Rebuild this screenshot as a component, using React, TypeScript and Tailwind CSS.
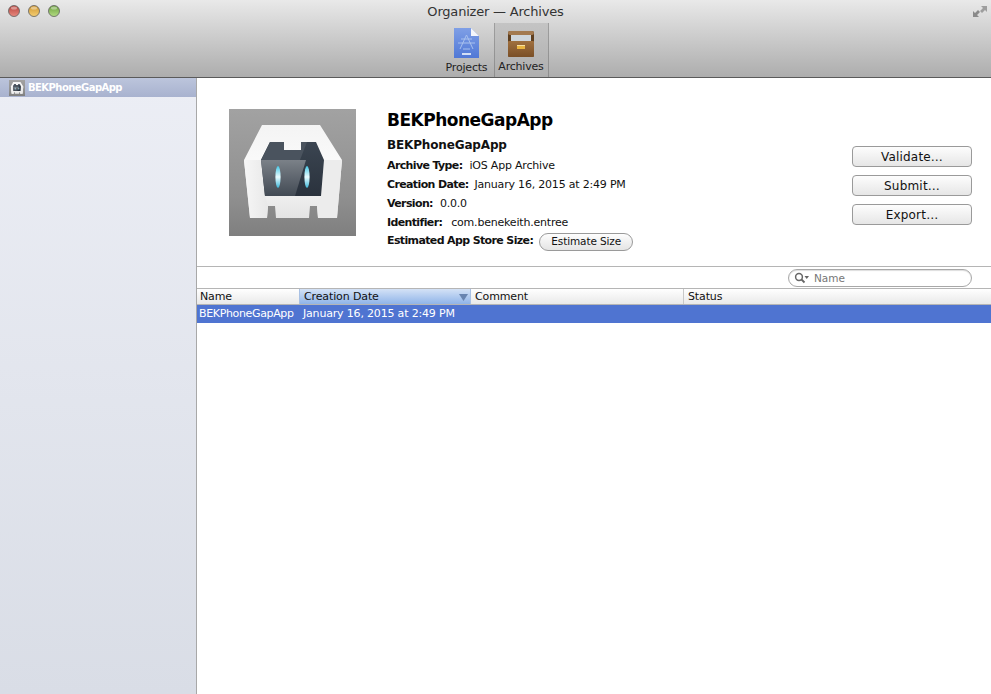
const font = { fontFamily: '"DejaVu Sans", sans-serif' };

function Light({ from, to, ring }: { from: string; to: string; ring: string }) {
  return (
    <svg width="12" height="12" viewBox="0 0 12 12">
      <defs>
        <linearGradient id={ring} x1="0" y1="0" x2="0" y2="1">
          <stop offset="0" stopColor={from} />
          <stop offset="1" stopColor={to} />
        </linearGradient>
      </defs>
      <circle cx="6" cy="6" r="5.5" fill={`url(#${ring})`} stroke="#5f5f5f" strokeWidth="0.8" />
      <ellipse cx="6" cy="3" rx="3" ry="1.5" fill="#fff" opacity="0.4" />
    </svg>
  );
}

function Cordova({ size, id }: { size: number; id: string }) {
  return (
    <svg width={size} height={size} viewBox="0 0 127 127" className="block">
      <defs>
        <linearGradient id={`${id}bg`} x1="0" y1="0" x2="0" y2="1">
          <stop offset="0" stopColor="#a2a2a2" />
          <stop offset="0.7" stopColor="#8f8f8f" />
          <stop offset="1" stopColor="#7f7f7f" />
        </linearGradient>
        <linearGradient id={`${id}body`} x1="0" y1="0" x2="0" y2="1">
          <stop offset="0" stopColor="#f4f4f4" />
          <stop offset="0.5" stopColor="#fbfbfb" />
          <stop offset="1" stopColor="#e4e4e4" />
        </linearGradient>
        <linearGradient id={`${id}side`} x1="0" y1="0" x2="1" y2="0">
          <stop offset="0" stopColor="#f6f6f6" />
          <stop offset="1" stopColor="#e8e8e8" />
        </linearGradient>
        <linearGradient id={`${id}glass`} x1="0" y1="0" x2="0" y2="1">
          <stop offset="0" stopColor="#3b4551" />
          <stop offset="1" stopColor="#2a323d" />
        </linearGradient>
        <linearGradient id={`${id}ref`} x1="0" y1="0" x2="0" y2="1">
          <stop offset="0" stopColor="#7b8188" />
          <stop offset="1" stopColor="#424a54" />
        </linearGradient>
        <linearGradient id={`${id}eye`} x1="0" y1="0" x2="0" y2="1">
          <stop offset="0" stopColor="#46c6e4" />
          <stop offset="0.5" stopColor="#eafcff" />
          <stop offset="1" stopColor="#3bb6d8" />
        </linearGradient>
      </defs>
      <rect width="127" height="127" fill={`url(#${id}bg)`} />
      <path d="M33 16H91L113 51L108 109H89L88 97H81L80 109H47L46 97H39L38 109H21L15 51Z" fill={`url(#${id}body)`} />
      <path d="M15 51H32L36 87L39 97L38 109H21Z" fill={`url(#${id}side)`} />
      <path d="M95 51H113L108 109H89L88 97L92 87Z" fill="#ececec" />
      <path d="M41 33H55V41H72V33H87L95 51L92 87H36L32 51Z" fill={`url(#${id}glass)`} />
      <path d="M32 51H77L66 87H36Z" fill={`url(#${id}ref)`} />
      <path d="M41 33H55V41H72V33H78L71 51H32Z" fill="#4a535e" />
      <ellipse cx="49" cy="68" rx="2.6" ry="11" fill={`url(#${id}eye)`} />
      <ellipse cx="78" cy="68" rx="2.6" ry="11" fill={`url(#${id}eye)`} />
    </svg>
  );
}

function TableHead({ label, className }: { label: string; className: string }) {
  return <div className={`flex items-center pt-[1px] text-[11px] tracking-[-0.12px] text-[#111] ${className}`}>{label}</div>;
}

function Button({ label }: { label: string }) {
  return (
    <div className="flex h-[21px] w-[120px] items-center justify-center rounded-[4px] border border-[#9a9a9a] bg-gradient-to-b from-[#fdfdfd] to-[#e6e6e6] text-[12px] tracking-[0.2px] text-[#111] shadow-[0_1px_0_#fff]">
      {label}
    </div>
  );
}

function Row({ label, value, gap }: { label: string; value: string; gap: string }) {
  return (
    <div className={`flex h-[19px] items-center text-[11px] text-[#111] ${gap}`}>
      <span className="font-bold tracking-[-0.63px]">{label}</span>
      <span className="tracking-[-0.2px]">{value}</span>
    </div>
  );
}

export default function App() {
  return (
    <div style={font} className="flex h-[694px] w-[991px] flex-col overflow-hidden bg-white">
      <header className="relative flex h-[78px] shrink-0 flex-col items-center border-b border-[#5a5a5a] bg-gradient-to-b from-[#e9e9e9] to-[#adadad]">
        <div className="absolute left-[8px] top-[5px] flex gap-[8px]">
          <Light from="#b8423b" to="#e88a80" ring="lr" />
          <Light from="#cf962f" to="#f5cf74" ring="ly" />
          <Light from="#6a9f3c" to="#b4dd84" ring="lg" />
        </div>
        <svg className="absolute right-[4px] top-[5px]" width="14" height="13" viewBox="0 0 14 13">
          <path d="M8 1H14V7L12 5L9 8L7 6L10 3Z" fill="#9e9e9e" />
          <path d="M0 12V6L2 8L5 5L7 7L4 10L6 12Z" fill="#8a8a8a" />
        </svg>
        <div className="flex h-[23px] items-center text-[13px] tracking-[-0.2px] text-[#333]">Organizer — Archives</div>
        <div className="flex h-[54px] w-full justify-center">
          <div className="ml-[-3px] flex w-[54px] flex-col items-center pt-[5px]">
            <svg width="25" height="30" viewBox="0 0 25 30">
              <defs>
                <linearGradient id="proj" x1="0" y1="0" x2="0" y2="1">
                  <stop offset="0" stopColor="#7f9fe6" />
                  <stop offset="1" stopColor="#5078d6" />
                </linearGradient>
              </defs>
              <path d="M0 0H17L25 8V30H0Z" fill="url(#proj)" />
              <path d="M17 0L25 8H17Z" fill="#f4f6fb" />
              <path d="M6 21L12.5 7L19 21M4 15H21M7 11H18M9 21H16" stroke="#a9c1ee" strokeWidth="1" fill="none" />
              <rect x="8" y="25" width="9" height="2" fill="#d3dff6" />
            </svg>
            <span className="mt-[3px] text-[11px] leading-[13px] tracking-[-0.2px] text-[#222]">Projects</span>
          </div>
          <div className="flex w-[55px] flex-col items-center border-x border-[#00000030] bg-gradient-to-b from-[#c4c4c4] to-[#aeaeae] pt-[8px]">
            <svg width="26" height="26" viewBox="0 0 26 26">
              <defs>
                <linearGradient id="drawer" x1="0" y1="0" x2="0" y2="1">
                  <stop offset="0" stopColor="#a0703f" />
                  <stop offset="1" stopColor="#7a4f27" />
                </linearGradient>
              </defs>
              <rect x="0" y="0" width="26" height="26" rx="2" fill="#5f3f1f" />
              <rect x="0" y="0" width="26" height="4" rx="2" fill="#a37a50" />
              <rect x="3" y="4" width="20" height="6" fill="#cfd6dc" />
              <rect x="0" y="10" width="26" height="16" rx="1" fill="url(#drawer)" />
              <rect x="9" y="14" width="8" height="4" fill="#e9b440" />
              <rect x="9" y="14" width="8" height="1" fill="#f9e0a0" />
            </svg>
            <span className="mt-[3px] text-[11px] leading-[13px] tracking-[-0.2px] text-[#222]">Archives</span>
          </div>
        </div>
      </header>
      <div className="flex min-h-0 flex-1">
        <aside className="w-[197px] shrink-0 border-r border-[#a8a8a8] bg-gradient-to-b from-[#eceef5] to-[#d9dde6]">
          <div className="flex h-[19px] items-center gap-[3px] bg-gradient-to-b from-[#bcc5dc] to-[#a8b2cf] pl-[9px] text-[10px] font-bold tracking-[-0.55px] text-white">
            <Cordova size={16} id="s" />
            <span>BEKPhoneGapApp</span>
          </div>
        </aside>
        <main className="flex min-w-0 flex-1 flex-col">
          <section className="flex h-[189px] shrink-0 border-b border-[#b5b5b5] pl-[32px] pt-[31px]">
            <Cordova size={127} id="m" />
            <div className="ml-[31px] mt-[-1px] w-[465px]">
              <h1 className="h-[25px] text-[17px] font-bold leading-[25px] tracking-[-0.5px] text-black">BEKPhoneGapApp</h1>
              <div className="mt-[1px] flex h-[23px] items-center pb-[2px] text-[12px] font-bold tracking-[-0.15px] text-[#111]">BEKPhoneGapApp</div>
              <Row label="Archive Type:" value="iOS App Archive" gap="gap-[7px]" />
              <Row label="Creation Date:" value="January 16, 2015 at 2:49 PM" gap="gap-[6px]" />
              <Row label="Version:" value="0.0.0" gap="gap-[7px]" />
              <Row label="Identifier:" value="com.benekeith.entree" gap="gap-[9px]" />
              <div className="mt-[-1px] flex h-[19px] items-center gap-[6px] text-[11px] text-[#111]">
                <span className="font-bold tracking-[-0.63px]">Estimated App Store Size:</span>
                <div className="flex h-[18px] w-[94px] items-center justify-center rounded-full border border-[#9a9a9a] bg-gradient-to-b from-[#fdfdfd] to-[#e4e4e4] text-[10.5px] tracking-[-0.12px]">Estimate Size</div>
              </div>
            </div>
            <div className="mt-[37px] flex flex-col gap-[8px]">
              <Button label="Validate…" />
              <Button label="Submit…" />
              <Button label="Export…" />
            </div>
          </section>
          <div className="flex h-[22px] shrink-0 items-center justify-end border-b border-[#b5b5b5] pr-[19px]">
            <div className="flex h-[18px] w-[184px] items-center gap-[5px] rounded-full border border-[#a8a8a8] bg-white pl-[5px] text-[10.5px] text-[#777] shadow-[inset_0_1px_1px_#ddd]">
              <svg width="15" height="12" viewBox="0 0 15 12">
                <circle cx="5" cy="5" r="3.4" fill="none" stroke="#666" strokeWidth="1.5" />
                <path d="M7.5 7.5L10.5 10.5" stroke="#666" strokeWidth="1.8" />
                <path d="M10.5 4H15L12.75 7Z" fill="#666" />
              </svg>
              <span className="pt-[2px]">Name</span>
            </div>
          </div>
          <div className="flex h-[16px] shrink-0 border-b border-[#b5b5b5] bg-gradient-to-b from-[#ffffff] to-[#e9e9e9]">
            <TableHead label="Name" className="w-[102px] pl-[3px]" />
            <div className="relative flex w-[172px] items-center border-x border-[#a9c1e4] bg-gradient-to-b from-[#d4e2f6] to-[#90b4e8] pl-[4px] pt-[1px] text-[11px] tracking-[-0.12px] text-[#111]">
              Creation Date
              <svg className="absolute right-[2px] top-[5px]" width="9" height="7" viewBox="0 0 9 7"><path d="M0 0H9L4.5 7Z" fill="#6884b0" /></svg>
            </div>
            <TableHead label="Comment" className="w-[213px] border-r border-[#c8c8c8] pl-[4px]" />
            <TableHead label="Status" className="flex-1 pl-[4px]" />
          </div>
          <div className="flex h-[18px] shrink-0 items-center bg-[#4f74d1] text-[11px] text-white">
            <span className="w-[103px] pl-[2px] tracking-[-0.35px]">BEKPhoneGapApp</span>
            <span className="pl-[3px] tracking-[-0.18px]">January 16, 2015 at 2:49 PM</span>
          </div>
        </main>
      </div>
    </div>
  );
}
